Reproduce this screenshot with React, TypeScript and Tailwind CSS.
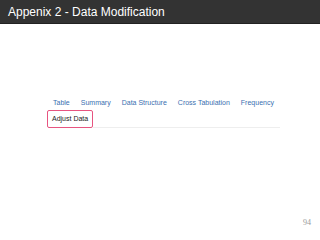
import React from 'react';

const tabs = ['Table', 'Summary', 'Data Structure', 'Cross Tabulation', 'Frequency'];

const App: React.FC = () => {
  return (
    <div className="w-[320px] h-[240px] bg-white flex flex-col" style={{ fontFamily: '"Liberation Sans", Arial, sans-serif' }}>
      <div className="h-[24px] bg-[#333333] border-b border-[#222222] flex items-center pl-[8px]">
        <span className="text-white text-[12px] leading-none">Appenix 2 - Data Modification</span>
      </div>
      <div className="pl-[47px] pt-[75px]">
        <div className="flex gap-[11px] pl-[6px] text-[7px] text-[#3a6fb0] leading-none h-[11px] items-start">
          {tabs.map((t) => (
            <span key={t}>{t}</span>
          ))}
        </div>
        <div className="flex items-end">
          <div className="w-[46px] h-[18px] border border-[#e75480] rounded-[2px] flex items-center pl-[4px] text-[7px] text-[#222222]">
            Adjust Data
          </div>
          <div className="w-[187px] border-b border-[#eeeeee]" />
        </div>
      </div>
      <div className="flex-1" />
      <div className="flex justify-end pr-[9px] pb-[13px]">
        <span className="text-[8px] leading-none text-[#999999]" style={{ fontFamily: '"Liberation Serif", serif' }}>94</span>
      </div>
    </div>
  );
};

export default App;
